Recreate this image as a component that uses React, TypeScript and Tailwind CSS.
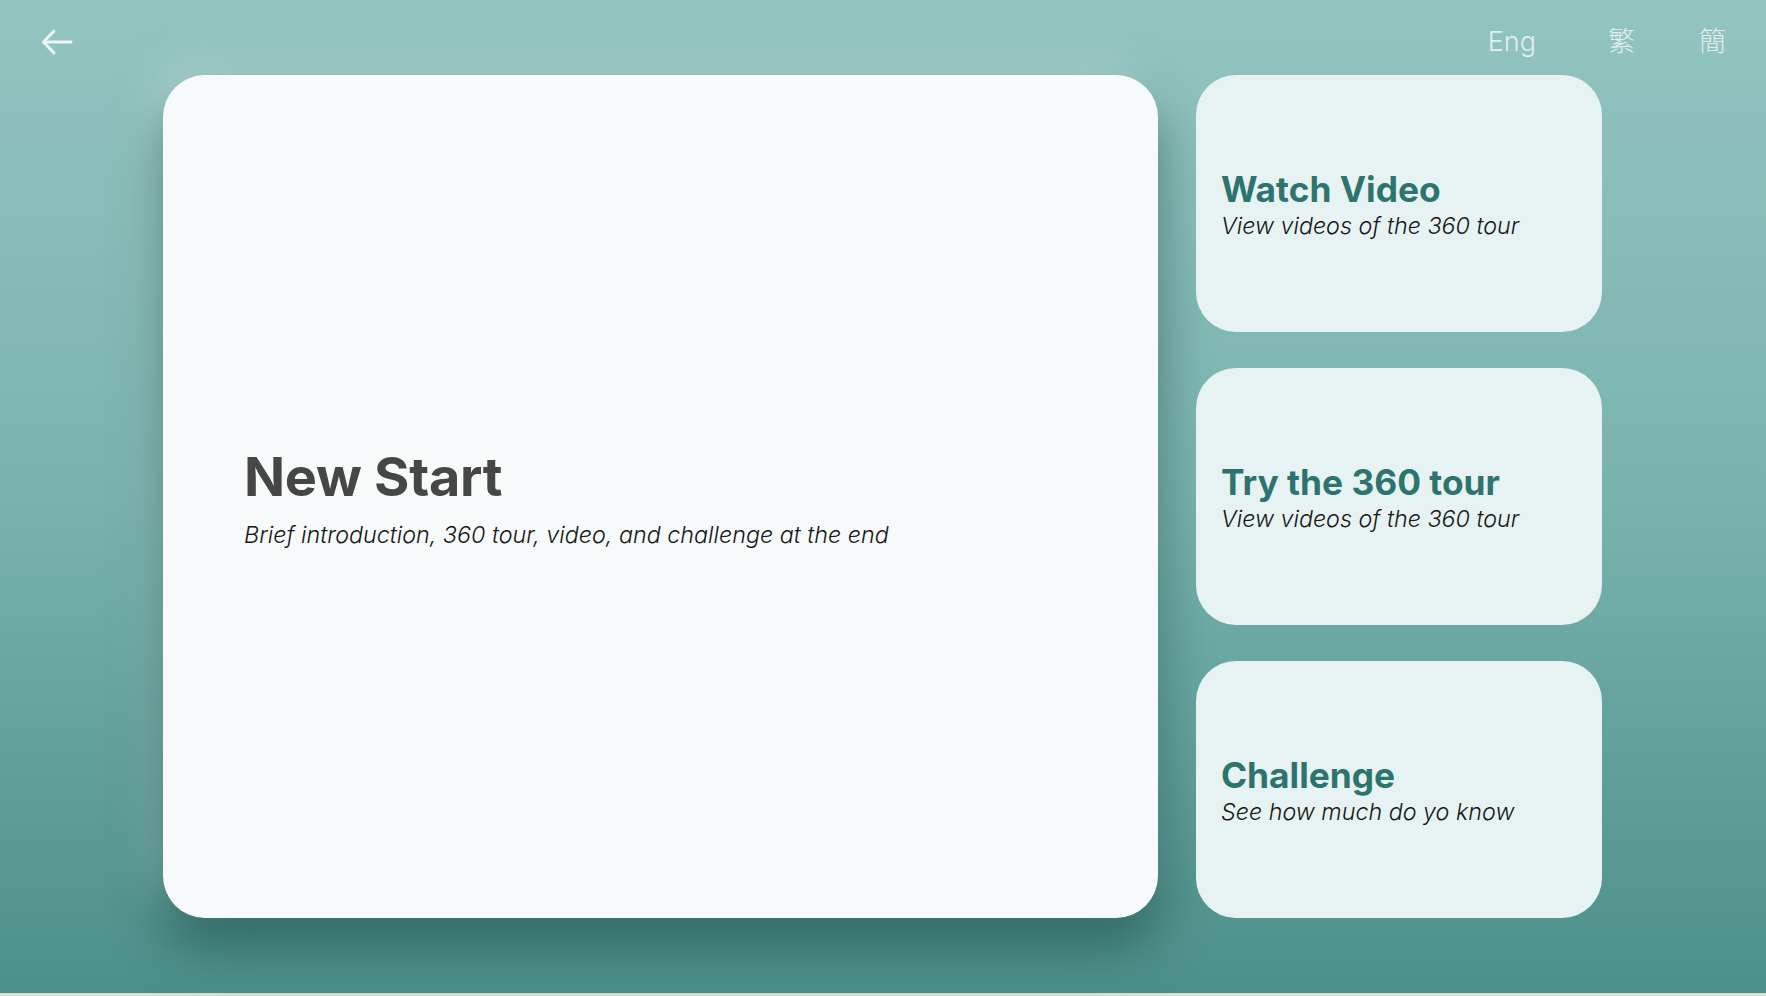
import React from "react";

const cards = [
  { title: "Watch Video", text: "View videos of the 360 tour" },
  { title: "Try the 360 tour", text: "View videos of the 360 tour" },
  { title: "Challenge", text: "See how much do yo know" },
];

function BackArrow() {
  return (
    <svg width="32" height="28" viewBox="0 0 32 28" fill="none" stroke="#eef5f4" strokeWidth="3" strokeLinecap="round" strokeLinejoin="round">
      <path d="M30 14H3" />
      <path d="M13 3 2.5 14 13 25" />
    </svg>
  );
}

export default function App() {
  return (
    <div className="w-full h-[996px] bg-[#d9dddc] font-['Inter','Noto_Sans_CJK_TC',sans-serif]">
      <div className="h-[993px] w-full bg-gradient-to-b from-[#93c4c0] via-[#79b3ae] to-[#4c8f8a] flex flex-col">
        <header className="h-[75px] flex items-center justify-between pl-[41px] pr-[40px] pt-[9px]">
          <button aria-label="Back">
            <BackArrow />
          </button>
          <div className="flex items-center text-[27px] font-light text-[#e2eeed]">
            <span className="mr-[72px]">Eng</span>
            <span className="mr-[64px]">繁</span>
            <span>簡</span>
          </div>
        </header>

        <main className="flex gap-[38px] pl-[163px]">
          <section className="w-[995px] h-[843px] rounded-[42px] bg-[#f6fafa] shadow-[0_28px_50px_rgba(25,75,70,0.6),-14px_-12px_40px_rgba(220,240,238,0.35)] flex flex-col justify-center pl-[81px] pt-[10px]">
            <h1 className="text-[54px] font-bold leading-none tracking-[-0.3px] text-[#464646]">New Start</h1>
            <p className="mt-[14px] text-[23.3px] font-light italic text-[#161616]">
              Brief introduction, 360 tour, video, and challenge at the end
            </p>
          </section>

          <div className="w-[406px] flex flex-col gap-[36px]">
            {cards.map((c) => (
              <div key={c.title} className="h-[257px] rounded-[40px] bg-[#e7f3f2] flex flex-col justify-center px-[25px] pt-[9px]">
                <h2 className="text-[35.3px] font-bold leading-none text-[#2e746e]">{c.title}</h2>
                <p className="mt-[2px] text-[23.3px] font-light italic text-[#161616]">{c.text}</p>
              </div>
            ))}
          </div>
        </main>
      </div>
    </div>
  );
}
